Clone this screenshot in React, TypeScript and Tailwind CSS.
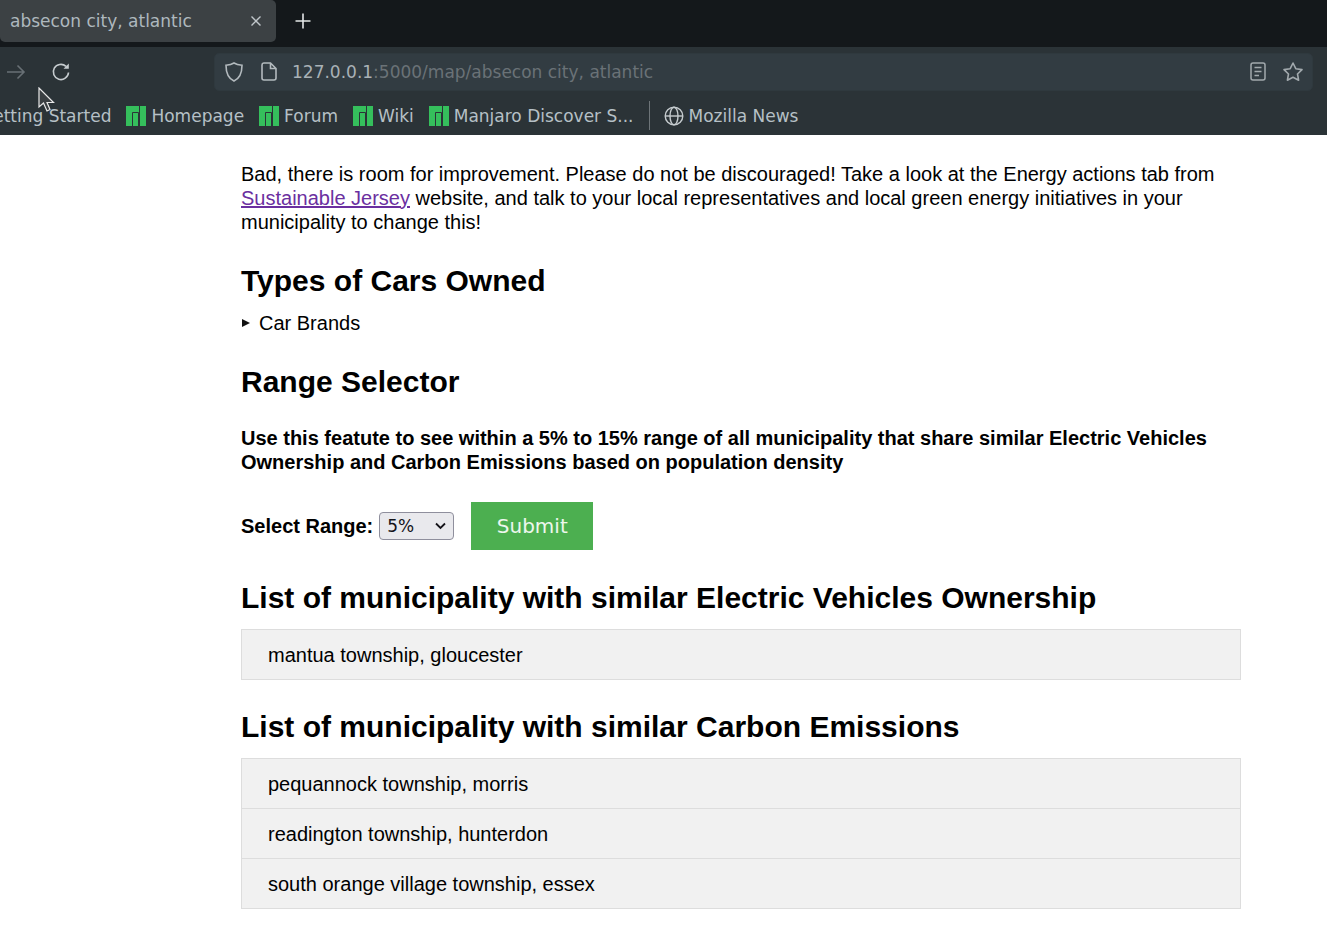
import React from "react";

function Manjaro() {
  return (
    <svg width="20" height="20" viewBox="0 0 20 20" className="shrink-0">
      <rect width="20" height="20" fill="#35bf5c" />
      <rect x="0" y="0" width="6" height="20" fill="#35bf5c" />
      <path d="M6.5 6.5H12.5V20" fill="none" stroke="#2b3337" strokeWidth="1" />
      <path d="M13.5 0V20" stroke="#2b3337" strokeWidth="1" />
      <path d="M6.5 6.5V20" stroke="#2b3337" strokeWidth="1" />
    </svg>
  );
}

function Bookmark({ label }: { label: string }) {
  return (
    <div className="flex items-center gap-[5px] shrink-0">
      <Manjaro />
      <span>{label}</span>
    </div>
  );
}

function Heading({ children, className }: { children: React.ReactNode; className: string }) {
  return <h2 className={`text-[30px] leading-[36px] font-bold text-black ${className}`}>{children}</h2>;
}

function Row({ children, last }: { children: React.ReactNode; last?: boolean }) {
  return (
    <div className={`h-[50px] flex items-center pl-[26px] bg-[#f1f1f1] border-x border-t border-[#dddddd] ${last ? "border-b h-[51px]" : ""}`}>
      {children}
    </div>
  );
}

export default function App() {
  return (
    <div className="min-h-[925px] bg-white font-['Liberation_Sans',Arial,sans-serif] text-[20px] leading-[24px] text-black overflow-hidden relative">
      <div className="font-['DejaVu_Sans',sans-serif] text-[#b6c0c6] text-[17px]">
        <div className="h-[47px] bg-[#14181b] flex items-start">
          <div className="w-[276px] h-[42px] bg-[#3c4144] rounded-b-[5px] rounded-tr-[5px] flex items-center justify-between pl-[10px] pr-[14px] text-[#aeb8be]">
            <span>absecon city, atlantic</span>
            <svg width="12" height="12" viewBox="0 0 12 12" fill="none" stroke="#c0c6ca" strokeWidth="1.4">
              <path d="M1.5 1.5L10.5 10.5M10.5 1.5L1.5 10.5" />
            </svg>
          </div>
          <svg width="16" height="16" viewBox="0 0 16 16" className="ml-[19px] mt-[13px]" fill="none" stroke="#e4e7e8" strokeWidth="1.6">
            <path d="M8 0.5V15.5M0.5 8H15.5" />
          </svg>
        </div>
        <div className="h-[49px] bg-[#2b3337] flex items-center pr-[14px]">
          <svg width="20" height="20" viewBox="0 0 20 20" className="ml-[6px]" fill="none" stroke="#687075" strokeWidth="1.6">
            <path d="M1 10H18M11.5 3.5L18 10L11.5 16.5" />
          </svg>
          <svg width="20" height="20" viewBox="0 0 20 20" className="ml-[25px]" fill="none" stroke="#c6cccf" strokeWidth="1.6">
            <path d="M17.5 10.5A7.6 7.6 0 1 1 15 4.3" />
            <path d="M17.8 1.5V6.8H12.5Z" fill="#c6cccf" stroke="none" />
          </svg>
          <div className="ml-[143px] flex-1 h-[38px] bg-[#323c42] rounded-[5px] flex items-center border border-[#2f393e]">
            <svg width="20" height="22" viewBox="0 0 20 22" className="ml-[9px]" fill="none" stroke="#b3babe" strokeWidth="1.6">
              <path d="M10 2C7.5 3.6 5 4 2 4.2C2 11 3.5 17 10 20C16.5 17 18 11 18 4.2C15 4 12.500 3.600 10 2Z" />
            </svg>
            <svg width="16" height="19" viewBox="0 0 16 19" className="ml-[17px]" fill="none" stroke="#b3babe" strokeWidth="1.6">
              <path d="M2.800 1H9.500L15 6.500V16A2 2 0 0 1 13 18H3A2 2 0 0 1 1 16V3A2 2 0 0 1 2.800 1ZM9.500 1V6.500H15" />
            </svg>
            <div className="ml-[15px] text-[#6a7277] flex-1">
              <span className="text-[#a9b1b6]">127.0.0.1</span>:5000/map/absecon city, atlantic
            </div>
            <svg width="16" height="19" viewBox="0 0 16 19" fill="none" stroke="#a2a9ad" strokeWidth="1.5">
              <rect x="1" y="1" width="14" height="17" rx="2" />
              <path d="M4.500 5.500H11.500M4.500 9.500H11.500M4.500 13.500H9" />
            </svg>
            <svg width="22" height="21" viewBox="0 0 22 21" className="ml-[16px] mr-[8px]" fill="none" stroke="#a2a9ad" strokeWidth="1.6">
              <path d="M11 2L13.800 7.700L20 8.600L15.500 13L16.600 19.200L11 16.300L5.400 19.200L6.500 13L2 8.600L8.200 7.700Z" strokeLinejoin="round" />
            </svg>
          </div>
        </div>
        <div className="h-[39px] bg-[#2b3337] flex items-center whitespace-nowrap overflow-hidden text-[#b6c0c6]">
          <span className="ml-[-20px]">Getting Started</span>
          <div className="ml-[15px]"><Bookmark label="Homepage" /></div>
          <div className="ml-[15px]"><Bookmark label="Forum" /></div>
          <div className="ml-[15px]"><Bookmark label="Wiki" /></div>
          <div className="ml-[15px]"><Bookmark label="Manjaro Discover S..." /></div>
          <div className="ml-[15px] w-px h-[29px] bg-[#6d7478]" />
          <svg width="20" height="20" viewBox="0 0 20 20" className="ml-[14px]" fill="none" stroke="#c6cccf" strokeWidth="1.4">
            <circle cx="10" cy="10" r="8.800" />
            <ellipse cx="10" cy="10" rx="4" ry="8.800" />
            <path d="M1.500 10H18.500" />
          </svg>
          <span className="ml-[5px]">Mozilla News</span>
        </div>
      </div>

      <main className="ml-[241px] w-[1000px] pt-[27px]">
        <p>
          Bad, there is room for improvement. Please do not be discouraged! Take a look at the Energy actions tab from{" "}
          <a href="#" className="text-[#6b2fa0] underline">Sustainable Jersey</a> website, and talk to your local representatives and local green energy initiatives in your municipality to change this!
        </p>
        <Heading className="mt-[29px]">Types of Cars Owned</Heading>
        <div className="mt-[12px] flex items-center">
          <svg width="10" height="10" viewBox="0 0 10 10" className="mr-[8px]"><path d="M1 1L9 5L1 9Z" fill="#111" /></svg>
          Car Brands
        </div>
        <Heading className="mt-[29px]">Range Selector</Heading>
        <p className="mt-[26px] font-bold">
          Use this featute to see within a 5% to 15% range of all municipality that share similar Electric Vehicles Ownership and Carbon Emissions based on population density
        </p>
        <div className="mt-[28px] flex items-center h-[48px]">
          <span className="font-bold">Select Range:</span>
          <div className="ml-[6px] w-[75px] h-[28px] rounded-[4px] border border-[#8f8f9d] bg-[#e9e9ed] flex items-center justify-between pl-[7px] pr-[7px] text-[17px] font-['DejaVu_Sans',sans-serif] text-[#15141a]">
            5%
            <svg width="11" height="8" viewBox="0 0 11 8" fill="none" stroke="#15141a" strokeWidth="1.800"><path d="M1 1.500L5.500 6L10 1.500" /></svg>
          </div>
          <button className="ml-[17px] w-[122px] h-[48px] bg-[#4caf50] text-white/90 text-[20px] font-['DejaVu_Sans',sans-serif]">Submit</button>
        </div>
        <Heading className="mt-[30px]">List of municipality with similar Electric Vehicles Ownership</Heading>
        <div className="mt-[13px]"><Row last>mantua township, gloucester</Row></div>
        <Heading className="mt-[29px]">List of municipality with similar Carbon Emissions</Heading>
        <div className="mt-[13px]">
          <Row>pequannock township, morris</Row>
          <Row>readington township, hunterdon</Row>
          <Row last>south orange village township, essex</Row>
        </div>
      </main>

      <svg width="18" height="26" viewBox="0 0 18 26" className="absolute left-[38px] top-[87px]">
        <path d="M1 1V20L5.500 16L9 24L12 22.500L9 15.500H15.500Z" fill="#3a3f42" stroke="#e8e8e8" strokeWidth="1.200" />
      </svg>
    </div>
  );
}
